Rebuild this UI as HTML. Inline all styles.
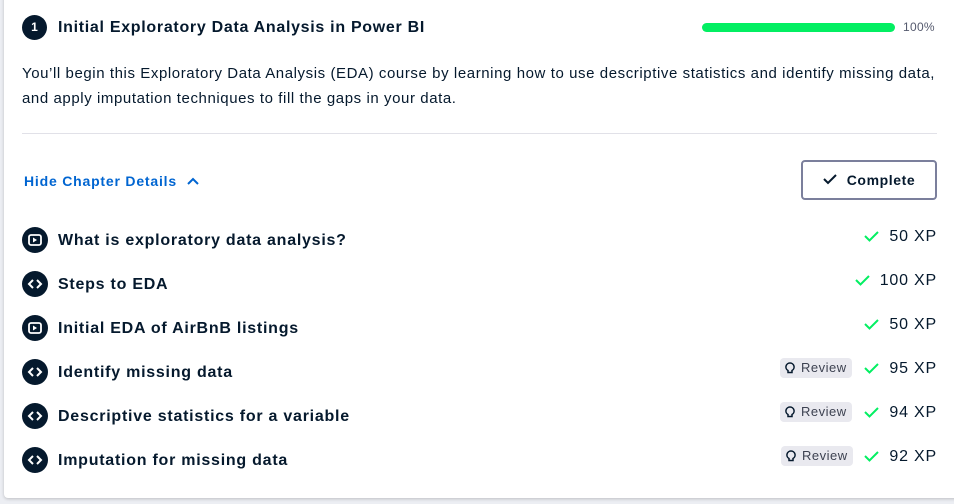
<!DOCTYPE html>
<html><head><style>
body{margin:0;width:954px;height:504px;background:#eceef3;font-family:"Liberation Sans",sans-serif;color:#05192d;overflow:hidden;position:relative}
.card{position:absolute;left:4px;top:-10px;width:980px;height:508px;background:#fff;border-radius:4px;box-shadow:0 1px 3px rgba(0,0,0,.2)}
.abs{position:absolute}
.num{left:22px;top:15px;width:25px;height:25px;border-radius:50%;background:#05192d;color:#fff;font-size:12px;font-weight:bold;text-align:center;line-height:25px}
.title{left:58px;top:19px;font-size:16px;font-weight:bold;letter-spacing:0.7px}
.bar{left:702px;top:23px;width:193px;height:9px;border-radius:5px;background:#03ef62}
.pct{left:903px;top:20px;font-size:12px;color:#555a6e;letter-spacing:0.3px}
.desc{left:22px;top:61px;font-size:15px;line-height:25px;width:925px;letter-spacing:0.58px}
.hr{left:22px;top:133px;width:915px;height:1px;background:#e1e1e8}
.hide{left:24px;top:173px;font-size:14px;font-weight:bold;color:#0065d1;letter-spacing:0.8px}
.btn{left:801px;top:160px;width:136px;height:40px;border:2px solid #7b7f9c;border-radius:4px;box-sizing:border-box;font-size:14px;font-weight:bold;text-align:center;line-height:36px;letter-spacing:0.6px}
.ic{left:22px;width:26px;height:26px;border-radius:50%;background:#05192d}
.ic svg{position:absolute;left:0;top:0}
.it{left:58px;font-size:16px;font-weight:bold;letter-spacing:0.75px}
.xp{right:17px;font-size:16px;text-align:right;letter-spacing:0.8px}
.xp svg{margin-right:10px;vertical-align:-1px}
.rv{width:72px;height:20px;background:#e9e9ef;border-radius:4px;font-size:13px;color:#3d4251;line-height:20px;box-sizing:border-box;padding-left:21px;letter-spacing:0.5px}
.rv svg{position:absolute;left:5px;top:4px}
</style></head><body>
<div class="card"></div>
<div class="abs num">1</div>
<div class="abs title">Initial Exploratory Data Analysis in Power BI</div>
<div class="abs bar"></div>
<div class="abs pct">100%</div>
<div class="abs desc">You’ll begin this Exploratory Data Analysis (EDA) course by learning how to use descriptive statistics and identify missing data, and apply imputation techniques to fill the gaps in your data.</div>
<div class="abs hr"></div>
<div class="abs hide">Hide Chapter Details <svg width="14" height="10" viewBox="0 0 14 10" style="margin-left:4px"><path d="M2 8 L7 3 L12 8" fill="none" stroke="#0065d1" stroke-width="2"/></svg></div>
<div class="abs btn"><svg width="14" height="12" viewBox="0 0 14 12" style="margin-right:10px"><path d="M1 6 L5 10 L13 2" fill="none" stroke="#05192d" stroke-width="2"/></svg>Complete</div>

<div class="abs ic" style="top:227px"><svg width="26" height="26"><rect x="7" y="8" width="12" height="10" rx="2" fill="none" stroke="#fff" stroke-width="1.8"/><path d="M11 10.5 L15 13 L11 15.5Z" fill="#fff"/></svg></div>
<div class="abs it" style="top:232px">What is exploratory data analysis?</div>
<div class="abs xp" style="top:228px"><svg width="15" height="12" viewBox="0 0 15 12"><path d="M1 6 L5.5 10.5 L14 2" fill="none" stroke="#03ef62" stroke-width="2"/></svg>50 XP</div>

<div class="abs ic" style="top:271px"><svg width="26" height="26"><path d="M11 9 L7 13 L11 17 M15 9 L19 13 L15 17" fill="none" stroke="#fff" stroke-width="2"/></svg></div>
<div class="abs it" style="top:276px">Steps to EDA</div>
<div class="abs xp" style="top:272px"><svg width="15" height="12" viewBox="0 0 15 12"><path d="M1 6 L5.5 10.5 L14 2" fill="none" stroke="#03ef62" stroke-width="2"/></svg>100 XP</div>

<div class="abs ic" style="top:315px"><svg width="26" height="26"><rect x="7" y="8" width="12" height="10" rx="2" fill="none" stroke="#fff" stroke-width="1.8"/><path d="M11 10.5 L15 13 L11 15.5Z" fill="#fff"/></svg></div>
<div class="abs it" style="top:320px">Initial EDA of AirBnB listings</div>
<div class="abs xp" style="top:316px"><svg width="15" height="12" viewBox="0 0 15 12"><path d="M1 6 L5.5 10.5 L14 2" fill="none" stroke="#03ef62" stroke-width="2"/></svg>50 XP</div>

<div class="abs ic" style="top:359px"><svg width="26" height="26"><path d="M11 9 L7 13 L11 17 M15 9 L19 13 L15 17" fill="none" stroke="#fff" stroke-width="2"/></svg></div>
<div class="abs it" style="top:364px">Identify missing data</div>
<div class="abs rv" style="left:780px;top:358px"><svg width="10" height="12"><path d="M5 1 A4 4 0 0 1 7 8.5 V10.5 H3 V8.5 A4 4 0 0 1 5 1Z" fill="none" stroke="#05192d" stroke-width="1.5"/></svg>Review</div>
<div class="abs xp" style="top:360px"><svg width="15" height="12" viewBox="0 0 15 12"><path d="M1 6 L5.5 10.5 L14 2" fill="none" stroke="#03ef62" stroke-width="2"/></svg>95 XP</div>

<div class="abs ic" style="top:403px"><svg width="26" height="26"><path d="M11 9 L7 13 L11 17 M15 9 L19 13 L15 17" fill="none" stroke="#fff" stroke-width="2"/></svg></div>
<div class="abs it" style="top:408px">Descriptive statistics for a variable</div>
<div class="abs rv" style="left:780px;top:402px"><svg width="10" height="12"><path d="M5 1 A4 4 0 0 1 7 8.5 V10.5 H3 V8.5 A4 4 0 0 1 5 1Z" fill="none" stroke="#05192d" stroke-width="1.5"/></svg>Review</div>
<div class="abs xp" style="top:404px"><svg width="15" height="12" viewBox="0 0 15 12"><path d="M1 6 L5.5 10.5 L14 2" fill="none" stroke="#03ef62" stroke-width="2"/></svg>94 XP</div>

<div class="abs ic" style="top:447px"><svg width="26" height="26"><path d="M11 9 L7 13 L11 17 M15 9 L19 13 L15 17" fill="none" stroke="#fff" stroke-width="2"/></svg></div>
<div class="abs it" style="top:452px">Imputation for missing data</div>
<div class="abs rv" style="left:781px;top:446px"><svg width="10" height="12"><path d="M5 1 A4 4 0 0 1 7 8.5 V10.5 H3 V8.5 A4 4 0 0 1 5 1Z" fill="none" stroke="#05192d" stroke-width="1.5"/></svg>Review</div>
<div class="abs xp" style="top:448px"><svg width="15" height="12" viewBox="0 0 15 12"><path d="M1 6 L5.5 10.5 L14 2" fill="none" stroke="#03ef62" stroke-width="2"/></svg>92 XP</div>
</body></html>
